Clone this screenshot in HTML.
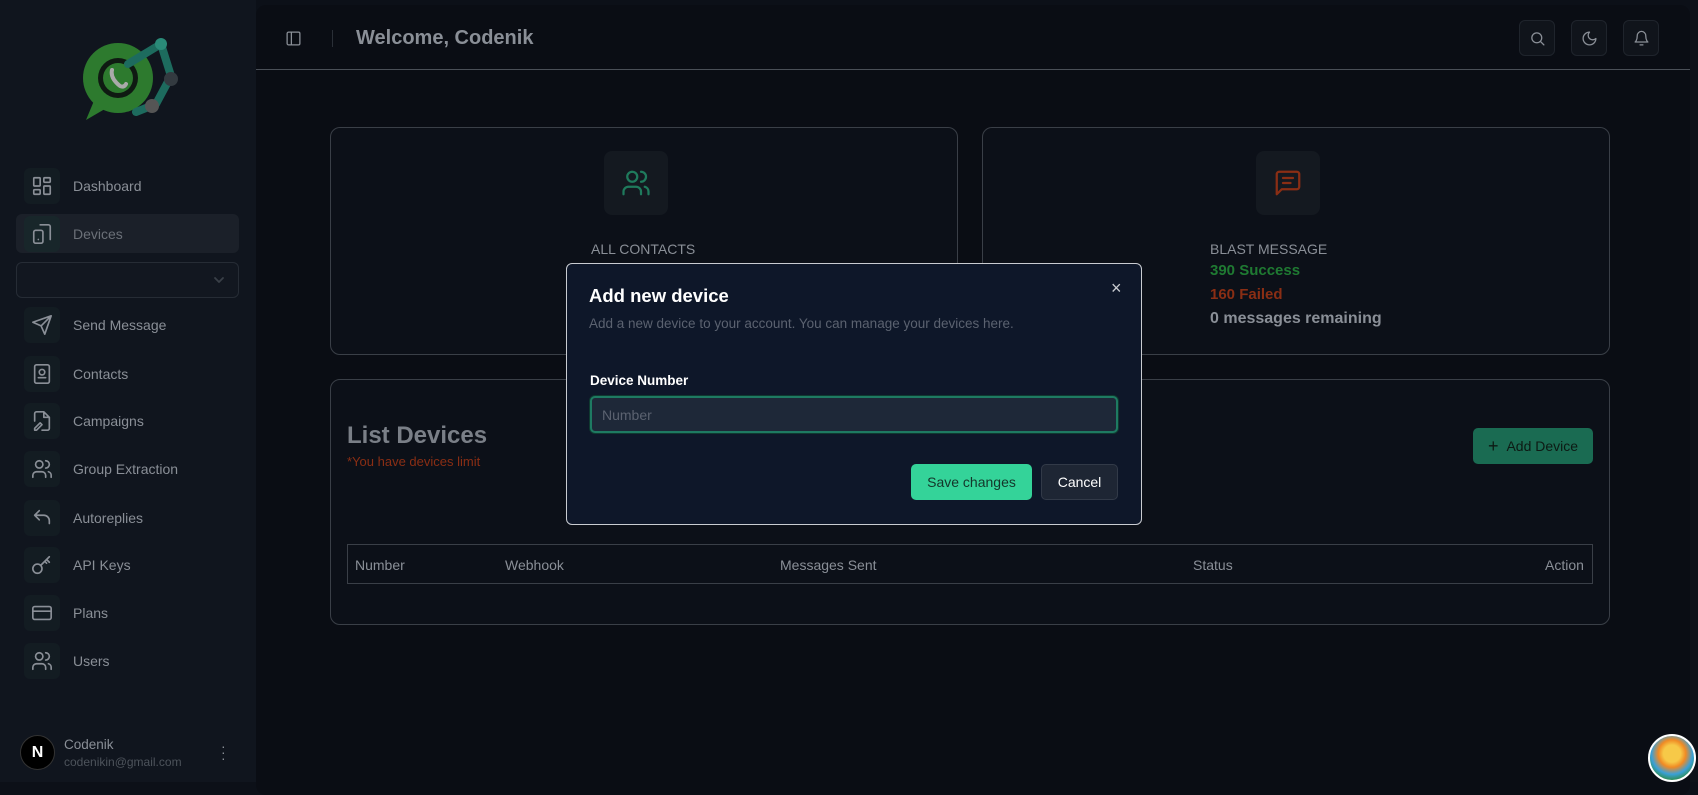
<!DOCTYPE html>
<html><head><meta charset="utf-8"><style>
*{box-sizing:border-box;margin:0;padding:0}
body{width:1698px;height:782px;overflow:hidden;background:#0c1018;font-family:"Liberation Sans",sans-serif;position:relative}
.a{position:absolute}
.side{left:0;top:0;width:256px;height:782px;background:#10151e}
.main{left:256px;top:5px;width:1434px;height:790px;background:#0a0d14;border-radius:10px}
.ib{width:36px;height:36px;border-radius:6px;background:#131c22;display:flex;align-items:center;justify-content:center}
.ni{left:24px;display:flex;align-items:center;gap:13px;color:#8a8f97;font-size:14px}
svg{fill:none;stroke:#8a8f97;stroke-width:1.8;stroke-linecap:round;stroke-linejoin:round}
.card{border:1px solid #3a3f47;border-radius:10px;background:#0c1018}
.hb{width:36px;height:36px;border:1px solid #1f242c;border-radius:6px;background:#10141b;display:flex;align-items:center;justify-content:center}
.t{color:#8a8f97;font-size:14px}
</style></head><body>
<div class="a side"></div>
<svg class="a" style="left:76px;top:34px;stroke:none" width="110" height="90" viewBox="0 0 110 90">
<circle cx="42" cy="44" r="35" fill="#2d7a2e"/><path d="M10 86 L20 62 L34 72Z" fill="#2d7a2e"/>
<circle cx="42" cy="44" r="20" fill="#0f1a12"/><circle cx="42" cy="44" r="15" fill="#2d7a2e"/>
<path d="M36 36 q-2 8 8 16 q4 2 6-2" stroke="#aaa" stroke-width="4" fill="none"/>
<path d="M52 30 L85 10 L95 42 L80 70 L60 78" stroke="#1d6b5e" stroke-width="8" fill="none"/>
<circle cx="85" cy="10" r="6" fill="#2a8a78"/><circle cx="95" cy="45" r="7" fill="#333a40"/><circle cx="76" cy="72" r="7" fill="#555"/>
</svg>
<div class="a" style="left:16px;top:214px;width:223px;height:39px;background:#1b2029;border-radius:6px"></div>
<div class="a" style="left:16px;top:262px;width:223px;height:36px;border:1px solid #262c35;border-radius:6px;background:#121720"></div>
<svg class="a" style="left:213px;top:274px" width="12" height="12" viewBox="0 0 12 12"><path d="M2 4l4 4 4-4" stroke="#3a4048"/></svg>
<div class="a ni" style="top:168px"><div class="ib"><svg width="22" height="22" viewBox="0 0 24 24"><rect x="3" y="3" width="7" height="9" rx="1"/><rect x="14" y="3" width="7" height="5" rx="1"/><rect x="14" y="12" width="7" height="9" rx="1"/><rect x="3" y="16" width="7" height="5" rx="1"/></svg></div>Dashboard</div>
<div class="a ni" style="top:216px;color:#6b7078"><div class="ib" style="background:#18262a"><svg width="22" height="22" viewBox="0 0 24 24"><rect x="3" y="8" width="10" height="14" rx="2"/><path d="M10 2h9a2 2 0 0 1 2 2v14M8 18h.01"/></svg></div>Devices</div>
<div class="a ni" style="top:307px"><div class="ib"><svg width="22" height="22" viewBox="0 0 24 24"><path d="M22 2L11 13M22 2l-7 20-4-9-9-4z"/></svg></div>Send Message</div>
<div class="a ni" style="top:356px"><div class="ib"><svg width="22" height="22" viewBox="0 0 24 24"><rect x="4" y="2" width="16" height="20" rx="2"/><circle cx="12" cy="10" r="3"/><path d="M8 16h8"/></svg></div>Contacts</div>
<div class="a ni" style="top:403px"><div class="ib"><svg width="22" height="22" viewBox="0 0 24 24"><path d="M14 2H6a2 2 0 0 0-2 2v8M14 2l6 6v12a2 2 0 0 1-2 2h-6M14 2v6h6M4 20l6-6 2 2-6 6H4z"/></svg></div>Campaigns</div>
<div class="a ni" style="top:451px"><div class="ib"><svg width="22" height="22" viewBox="0 0 24 24"><circle cx="9" cy="7" r="4"/><path d="M2 21v-2a4 4 0 0 1 4-4h6a4 4 0 0 1 4 4v2M16 3a4 4 0 0 1 0 8M22 21v-2a4 4 0 0 0-3-4"/></svg></div>Group Extraction</div>
<div class="a ni" style="top:500px"><div class="ib"><svg width="22" height="22" viewBox="0 0 24 24"><path d="M9 14L4 9l5-5M4 9h10a6 6 0 0 1 6 6v3"/></svg></div>Autoreplies</div>
<div class="a ni" style="top:547px"><div class="ib"><svg width="22" height="22" viewBox="0 0 24 24"><circle cx="7" cy="16" r="5"/><path d="M11 12l9-9M17 6l3 3M15 8l2 2"/></svg></div>API Keys</div>
<div class="a ni" style="top:595px"><div class="ib"><svg width="22" height="22" viewBox="0 0 24 24"><rect x="2" y="5" width="20" height="14" rx="2"/><path d="M2 10h20"/></svg></div>Plans</div>
<div class="a ni" style="top:643px"><div class="ib"><svg width="22" height="22" viewBox="0 0 24 24"><circle cx="9" cy="7" r="4"/><path d="M2 21v-2a4 4 0 0 1 4-4h6a4 4 0 0 1 4 4v2M16 3a4 4 0 0 1 0 8M22 21v-2a4 4 0 0 0-3-4"/></svg></div>Users</div>
<div class="a" style="left:20px;top:735px;width:35px;height:35px;border-radius:50%;background:#000;border:1px solid #333;color:#fff;font-size:16px;font-weight:bold;display:flex;align-items:center;justify-content:center">N</div>
<div class="a" style="left:64px;top:737px;color:#8a8f97;font-size:13.5px">Codenik</div>
<div class="a" style="left:64px;top:755px;color:#4d535b;font-size:12px">codenikin@gmail.com</div>
<div class="a" style="left:221px;top:743px;color:#8a8f97;font-size:14px;line-height:6px">·<br>·<br>·</div>

<div class="a main"></div>
<div class="a" style="left:256px;top:69px;width:1434px;height:1px;background:#4a4f57"></div>
<svg class="a" style="left:285px;top:30px" width="17" height="17" viewBox="0 0 24 24"><rect x="3" y="3" width="18" height="18" rx="2"/><path d="M9 3v18"/></svg>
<div class="a" style="left:332px;top:30px;width:1px;height:17px;background:#2a2f37"></div>
<div class="a" style="left:356px;top:27px;color:#8a8f97;font-size:20px;font-weight:bold">Welcome, Codenik</div>
<div class="a hb" style="left:1519px;top:20px"><svg width="17" height="17" viewBox="0 0 24 24"><circle cx="11" cy="11" r="7"/><path d="M21 21l-4.5-4.5"/></svg></div>
<div class="a hb" style="left:1571px;top:20px"><svg width="17" height="17" viewBox="0 0 24 24"><path d="M12 3a6 6 0 0 0 9 9 9 9 0 1 1-9-9z"/></svg></div>
<div class="a hb" style="left:1623px;top:20px"><svg width="17" height="17" viewBox="0 0 24 24"><path d="M6 8a6 6 0 0 1 12 0c0 7 3 9 3 9H3s3-2 3-9M10 21h4"/></svg></div>
<div class="a" style="left:1690px;top:0;width:8px;height:782px;background:#0e1219"></div>

<div class="a card" style="left:330px;top:127px;width:628px;height:228px"></div>
<div class="a ib" style="left:604px;top:151px;width:64px;height:64px;background:#141920;border-radius:8px"><svg width="30" height="30" viewBox="0 0 24 24" style="stroke:#1f7a5c"><circle cx="9" cy="7" r="4"/><path d="M2 21v-2a4 4 0 0 1 4-4h6a4 4 0 0 1 4 4v2M16 3a4 4 0 0 1 0 8M22 21v-2a4 4 0 0 0-3-4"/></svg></div>
<div class="a t" style="left:591px;top:241px">ALL CONTACTS</div>
<div class="a card" style="left:982px;top:127px;width:628px;height:228px"></div>
<div class="a ib" style="left:1256px;top:151px;width:64px;height:64px;background:#141920;border-radius:8px"><svg width="30" height="30" viewBox="0 0 24 24" style="stroke:#8a2e14"><path d="M21 15a2 2 0 0 1-2 2H7l-4 4V5a2 2 0 0 1 2-2h14a2 2 0 0 1 2 2z"/><path d="M8 8h8M8 12h6"/></svg></div>
<div class="a t" style="left:1210px;top:241px">BLAST MESSAGE</div>
<div class="a" style="left:1210px;top:262px;color:#1f7a32;font-size:15px;font-weight:bold">390 Success</div>
<div class="a" style="left:1210px;top:286px;color:#8a2e14;font-size:15px;font-weight:bold">160 Failed</div>
<div class="a" style="left:1210px;top:310px;color:#8a8f97;font-size:16px;font-weight:bold">0 messages remaining</div>

<div class="a card" style="left:330px;top:379px;width:1280px;height:246px"></div>
<div class="a" style="left:347px;top:422px;color:#7a7f87;font-size:24px;font-weight:bold">List Devices</div>
<div class="a" style="left:347px;top:454px;color:#8a2e14;font-size:13px">*You have devices limit</div>
<div class="a" style="left:1473px;top:428px;width:120px;height:36px;background:#1a6b52;border-radius:5px;color:#0d1a14;font-size:14px;display:flex;align-items:center;justify-content:center;gap:8px"><span style="font-size:18px">+</span>Add Device</div>
<div class="a" style="left:347px;top:544px;width:1246px;height:40px;border:1px solid #3a3f47"></div>
<div class="a t" style="left:355px;top:557px">Number</div>
<div class="a t" style="left:505px;top:557px">Webhook</div>
<div class="a t" style="left:780px;top:557px">Messages Sent</div>
<div class="a t" style="left:1193px;top:557px">Status</div>
<div class="a t" style="left:1545px;top:557px">Action</div>

<div class="a" style="left:566px;top:263px;width:576px;height:262px;background:#0e1729;border:1px solid #c9ccd1;border-radius:6px"></div>
<div class="a" style="left:1111px;top:278px;color:#c9ccd1;font-size:18px">×</div>
<div class="a" style="left:589px;top:285px;color:#fff;font-size:18.5px;font-weight:bold">Add new device</div>
<div class="a" style="left:589px;top:316px;color:#5b6270;font-size:13.5px">Add a new device to your account. You can manage your devices here.</div>
<div class="a" style="left:590px;top:373px;color:#fff;font-size:13.5px;font-weight:bold">Device Number</div>
<div class="a" style="left:590px;top:396px;width:528px;height:37px;border:2px solid #1e7a62;border-radius:5px;background:#1e2838;box-shadow:0 0 0 1px #0f3a30;color:#5b6270;font-size:14px;padding:9px 10px">Number</div>
<div class="a" style="left:911px;top:464px;width:121px;height:36px;background:#34d399;border-radius:5px;color:#14362a;font-size:14px;display:flex;align-items:center;justify-content:center">Save changes</div>
<div class="a" style="left:1041px;top:464px;width:77px;height:36px;background:#1e2634;border:1px solid #323a48;border-radius:5px;color:#fff;font-size:14px;display:flex;align-items:center;justify-content:center">Cancel</div>

<div class="a" style="left:1648px;top:734px;width:48px;height:48px;border-radius:50%;background:radial-gradient(circle at 50% 40%,#f7c948 0 25%,#f08a24 40%,#3aa0d8 60%,#2b8a3e 80%);border:2px solid #fff"></div>
</body></html>
